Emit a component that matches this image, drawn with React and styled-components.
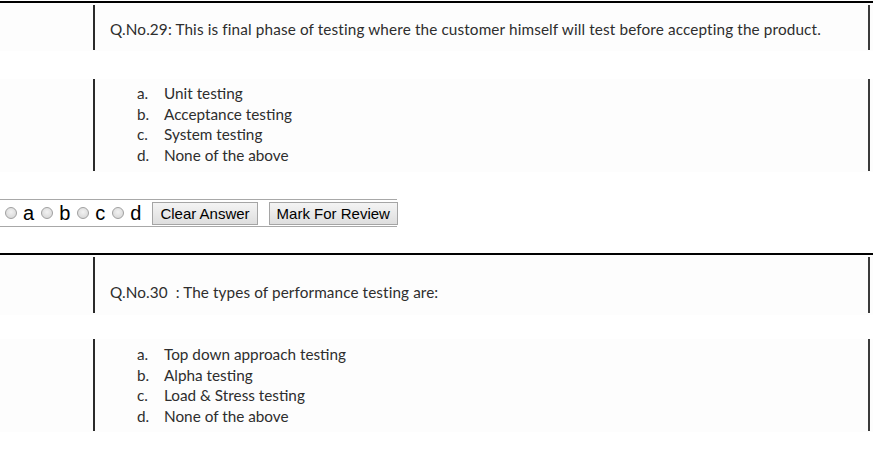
import React from "react";
import styled, { createGlobalStyle } from "styled-components";

const Global = createGlobalStyle`
  html, body { margin: 0; padding: 0; background: #fff; }
  body { font-family: "Liberation Sans", Arial, sans-serif; }
`;

const Page = styled.div`
  width: 873px;
  display: flex;
  flex-direction: column;
`;

const Rule = styled.div`
  height: 2px;
  background: #000;
  margin-top: ${(p) => p.$top || 0}px;
`;

const Band = styled.div`
  background: #fdfdfd;
  height: ${(p) => p.$h}px;
  margin-top: ${(p) => p.$top || 0}px;
  padding-top: ${(p) => p.$pad || 0}px;
  box-sizing: border-box;
`;

const Frame = styled.div`
  margin-left: 93px;
  width: 777px;
  box-sizing: border-box;
  height: ${(p) => p.$h}px;
  border-left: 2px solid #2a2a2a;
  border-right: 2px solid #3a3a3a;
  font-family: Lato, "Open Sans", sans-serif;
  color: #2e2e2e;
  padding-top: ${(p) => p.$pt || 0}px;
`;

const QText = styled.div`
  margin-left: 15px;
  font-size: 15.3px;
  letter-spacing: ${(p) => p.$ls}px;
  line-height: 20px;
  white-space: pre;
`;

const OptList = styled.ol`
  list-style: none;
  margin: 0;
  padding: 0 0 0 42px;
  font-size: 15.3px;
  line-height: 20.7px;
`;

const Opt = styled.li`
  display: flex;
`;

const OptKey = styled.span`
  width: 27px;
  flex: none;
`;

const AnswerBar = styled.div`
  margin-top: 27px;
  width: 397px;
  height: 28px;
  box-sizing: border-box;
  border-top: 1px solid #a8a8a8;
  border-bottom: 1px solid #a8a8a8;
  display: flex;
  align-items: center;
  padding-left: 5px;
  white-space: nowrap;
`;

const Choice = styled.label`
  display: flex;
  align-items: center;
  font-size: 20px;
  color: #000;
  margin-right: 7px;
  flex: none;
`;

const Radio = styled.input.attrs({ type: "radio", name: "ans" })`
  appearance: none;
  margin: 0 6px 0 0;
  width: 12px;
  height: 12px;
  border-radius: 50%;
  border: 1px solid #a0a0a0;
  background: radial-gradient(circle at 50% 40%, #f2f2f2 0%, #d8d8d8 80%);
  box-sizing: border-box;
`;

const Button = styled.button`
  flex: none;
  white-space: nowrap;
  font-family: "Liberation Sans", Arial, sans-serif;
  font-size: 15px;
  height: 23px;
  padding: 0 7px;
  margin-left: ${(p) => p.$ml}px;
  border: 1px solid #a5a5a5;
  background: linear-gradient(#f4f4f4, #dedede);
  color: #000;
  border-radius: 0;
  line-height: 21px;
`;

const questions = [
  {
    q: "Q.No.29: This is final phase of testing where the customer himself will test before accepting the product.",
    ls: 0.13,
    opts: ["Unit testing", "Acceptance testing", "System testing", "None of the above"],
  },
  {
    q: "Q.No.30  : The types of performance testing are:",
    ls: 0.1,
    opts: ["Top down approach testing", "Alpha testing", "Load & Stress testing", "None of the above"],
  },
];

const Options = ({ opts, top, pt }) => (
  <Band $h={93} $top={top}>
    <Frame $h={92} $pt={pt}>
      <OptList>
        {opts.map((o, i) => (
          <Opt key={o}>
            <OptKey>{"abcd"[i]}.</OptKey>
            {o}
          </Opt>
        ))}
      </OptList>
    </Frame>
  </Band>
);

export default function App() {
  return (
    <Page>
      <Global />
      <Rule $top={1} />
      <Band $h={48} $pad={2}>
        <Frame $h={45} $pt={14}>
          <QText $ls={questions[0].ls}>{questions[0].q}</QText>
        </Frame>
      </Band>
      <Options opts={questions[0].opts} top={28} pt={4} />
      <AnswerBar>
        {["a", "b", "c", "d"].map((l) => (
          <Choice key={l}>
            <Radio />
            {l}
          </Choice>
        ))}
        <Button $ml={4}>Clear Answer</Button>
        <Button $ml={11}>Mark For Review</Button>
      </AnswerBar>
      <Rule $top={26} />
      <Band $h={60} $pad={2}>
        <Frame $h={56} $pt={25}>
          <QText $ls={questions[1].ls}>{questions[1].q}</QText>
        </Frame>
      </Band>
      <Options opts={questions[1].opts} top={24} pt={5} />
    </Page>
  );
}
